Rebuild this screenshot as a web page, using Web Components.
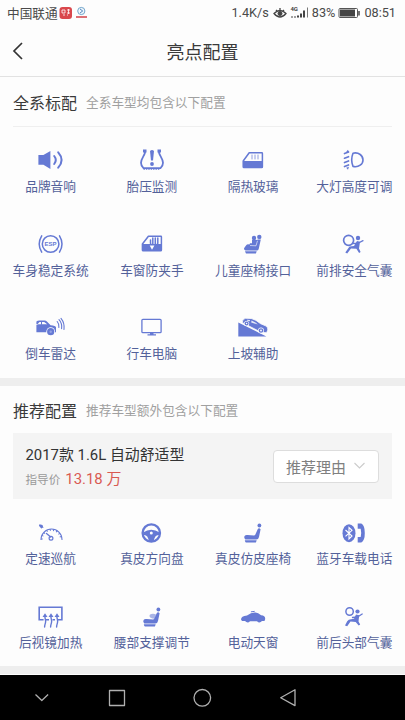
<!DOCTYPE html>
<html lang="zh-CN"><head><meta charset="utf-8"><title>亮点配置</title>
<style>
html,body{margin:0;height:720px;overflow:hidden;background:#fdfdfd}
body{font-family:Roboto,"Noto Sans CJK SC",sans-serif;color:#333}
</style></head><body>
<highlights-page></highlights-page>
<script>
const def=(name,html,setup)=>customElements.define(name,class extends HTMLElement{
  constructor(){super();const t=document.createElement('template');t.innerHTML=html;
    this.attachShadow({mode:'open'}).append(t.content.cloneNode(true));}
  connectedCallback(){if(setup)setup(this,this.shadowRoot);}
});
const L='fill="none" stroke="currentColor" stroke-linecap="round" stroke-linejoin="round"';
const seat='<path d="M22.700 10.200q1.200-1.700 2.900 0L24 18q-.6 2.500-2.700 2.500H10.300q-1.700-1.800-.7-3.500 1-1.400 3-1l6.300.4q1.400.1 1.700-1.300z"/><path d="M9.800 21.300h11.900l-.8 2.200H11q-.8 0-1.200-2.200z"/>';
const icons={
speaker:`<path d="M5.400 9h5l7-4v18l-7-4.200h-5z"/><path ${L} stroke-width="2" d="M21.200 10q3.200 4 0 8M25.200 6.300q6.800 7.700 0 15.400"/>`,
tire:`<path ${L} stroke-width="1.800" d="M11 5.200c.8 3-4 7-4 11.500q0 3.200 2.500 5.400h17q2.500-2.200 2.500-5.400c0-4.500-4.800-8.500-4-11.500"/><path d="M9 3.500h3.500v3H9zM23.500 3.500H27v3h-3.500z"/><path ${L} stroke-width="1.200" stroke-dasharray=".4 2" d="M10 23.200h16"/><path d="M16 5q2-2 4 0l-1 9.500h-2z"/><circle cx="18" cy="18" r="1.900"/>`,
glass:`<path ${L} stroke-width="1.500" d="M8.200 15l6-8.200h12.600q.6 0 .6.600v13.400q0 .8-.8.800H9q-.8 0-.8-.8z"/><path d="M8 15h19.800v6q0 1-1 1H9q-1 0-1-1z"/><path ${L} stroke-width=".9" opacity=".8" d="M17 9v4M20 9v4M23 9v4"/>`,
lamp:`<path ${L} stroke-width="1.600" d="M17 7.200c5.800-1.300 10 2.500 10 6.700s-4.200 7.800-10 6.500q-2.600-6.600 0-13.200z"/><path ${L} stroke-width="1.700" d="M8.500 7.500l4-1.500M8.500 12.200l4-1.500M8.500 16.500l4-1.500M8.500 20.500l4-1.500"/><path d="M10.200 5.700L12 3.800l1 2.700zM10.200 21.700l1.800 2 1-3z"/>`,
esp:`<circle cx="17.600" cy="14" r="8.300" ${L} stroke-width="1.500"/><path ${L} stroke-width="1.500" d="M8.700 5.800q-5 8.200 0 16.400M26.500 5.800q5 8.200 0 16.400"/><text x="17.600" y="16.200" font-family="Liberation Sans,sans-serif" font-size="6" font-weight="700" text-anchor="middle" textLength="12">ESP</text>`,
pinch:`<path ${L} stroke-width="1.500" d="M8.400 14l6-7.800h12.500q.5 0 .5.500V20q0 .8-.8.800H9.200q-.8 0-.8-.8z"/><path d="M8 14h19.700v6q0 1-1 1H9q-1 0-1-1z"/><path ${L} stroke-width="1.500" d="M16.500 10v3q0 2 2 2h3q2.300 0 2.300-2V8M18.800 8v6M21.300 8v6"/><path fill="#fff" d="M15.700 15.500h4.700L18 19.800z"/>`,
child:`<path d="M22.600 9.500h3.200L23.700 19q-.4 1.500-2 1.500H10.500q-2-.8-1.300-2.500l2-2.800q1-1.200 3-.7l5.500.5z"/><path d="M10 21.300h11.700l-.8 2.200H11z"/><circle cx="24.300" cy="6.900" r="2.200"/><circle cx="19" cy="8" r="2.200"/><path d="M17 9.800l5.600.2-.6 5.500h-8l1-2.200h2z"/><path fill="none" stroke="#fff" stroke-width=".6" d="M15 15.500l6 .3 1.500-5"/>`,
airbag:`<circle cx="12.600" cy="10.300" r="5" ${L} stroke-width="1.700"/><circle cx="22" cy="8" r="2.200"/><path d="M21 11l3 .7-1 6.700 1.600 3.500-1.500 1-2.700-4.100-5.400-.3-3.800 5-1.900-1.100 4.200-6 4.500-.5z"/><path ${L} stroke-width="1.300" d="M17.500 13.500l4 0 5.500-2.800"/>`,
radar:`<path fill-rule="evenodd" d="M3.400 8.500q1-1 3-1h5.200q1.400 0 2.300 1l3.700 3.800q5 .3 5.400 2v5h-19.600v-7.500l2.200-.5h8.600L11.200 8.900H6.500l-1.800 2H3.400z"/><circle cx="17.700" cy="18.700" r="4.400" fill="#fff"/><circle cx="17.700" cy="18.700" r="3.600"/><circle cx="17.700" cy="18.700" r="1.200" fill="#93a2e5"/><path d="M8 8.500h1v3.200H8z"/><path ${L} stroke-width="1.100" d="M24.200 8.500q2.200 2.500 1.700 6M26 6.600q3.300 3.600 2.600 9M28 5.300q3.800 4.600 3 11.200"/>`,
monitor:`<rect x="7.900" y="6.300" width="19.200" height="13.400" rx="1" ${L} stroke-width="1.300"/><path d="M16 20h3.500v1.300H22v1.200h-8.500v-1.200H16z"/>`,
hill:`<path d="M3.300 9.500l28 13.900h-28z"/><path stroke="#fdfdfd" stroke-width=".8" d="M7.200 9.500q.2-3.800 3.400-4.200 6-.7 10.400 2.100l4.600 3.300 5.600 2.400q2 1.600 1.600 4l-1.200 2.600-5.300-.3z"/><path fill="#fff" opacity=".85" d="M16.500 7.500l4.300 2.200 2 1.700-6.600-1.900zM12 6.700l3 .4-.2 1.200-3-.8z"/><circle cx="11.600" cy="10.500" r="2.600" fill="#fff"/><circle cx="11.600" cy="10.500" r="2"/><circle cx="11.600" cy="10.500" r=".7" fill="#fff"/><circle cx="26" cy="17.500" r="2.900" fill="#fff"/><circle cx="26" cy="17.500" r="2.300"/><circle cx="26" cy="17.500" r=".9" fill="#fff"/>`,
gauge:`<path ${L} stroke-width="1.100" d="M8 20.500a10.500 10.500 0 1121 0"/><path fill="none" stroke="currentColor" stroke-width="1.600" stroke-dasharray="1 2.300" d="M8.900 20.500a9.400 9.400 0 0119 0"/><path d="M6.500 5.200l3 .8 1 3-1.500-.3-.5 1-2.600-3z"/><path ${L} stroke-width="1.300" d="M13.500 14.500l4.200 3.500"/><circle cx="18" cy="19.300" r="1.900" ${L} stroke-width="1.200"/>`,
wheel:`<circle cx="17.300" cy="14" r="8.700" ${L} stroke-width="2.300"/><path fill-rule="evenodd" d="M9 13.500q8.300-5.500 16.600 0l-.6 2.500q-4.300-.5-5.200 6h-5q-.9-6.500-5.200-6zM17.300 12.400a1.500 1.500 0 100 3 1.500 1.500 0 000-3z"/>`,
seat:`<circle cx="24.400" cy="6.500" r="1.900"/>${seat}`,
phone:`<ellipse cx="13" cy="14.200" rx="6.500" ry="9"/><path fill="none" stroke="#fff" stroke-width="1.100" d="M9.500 11l6.500 6-3 3V8.500l3 2.800-6.500 6"/><path d="M21.700 4.400h3.600q3.500 1.600 3.500 9.500t-3.500 9.500h-3.600v-5.300h3q1-4.200 0-8.400h-3z"/>`,
mirror:`<path fill="none" stroke="currentColor" stroke-width="1.600" d="M10.600 16.700H6.200V4.300h22.700v12.400h-4.400M13 16.700h3M19.500 16.700h2.500"/><path ${L} stroke-width="1.400" d="M12 12.500c-.5 3 1 4 .6 6.500s-1 3-1 5M18 12.500c-.5 3 1 4 .6 6.500s-1 3-1 5M24 12.500c-.5 3 1 4 .6 6.500s-1 3-1 5"/><path d="M9.500 14l2.500-3.800 2.500 3.800zM15.500 14l2.500-3.800 2.500 3.800zM21.500 14l2.500-3.800 2.500 3.800z"/>`,
lumbar:`<circle cx="24.400" cy="6.500" r="1.900"/>${seat}<path opacity=".55" d="M16 11.500q3-1.700 6 0l-.8 4.200q-3.200 0-5-1.300-1.500-1.400-.2-2.900z"/>`,
sunroof:`<path d="M6 16.500q0-3.300 6-4 4.500-3.300 8.500-2.900 2.600.1 5.600 2.700 4.200.3 4.100 3.700l-.7 1.900h-2.500q-2.400 2.800-5 .3h-7q-2.400 2.500-5-.3H7z"/><path ${L} stroke-width="1" d="M16.300 8.800l3-.4"/>`,
head:`<circle cx="13.600" cy="8.500" r="3.700" ${L} stroke-width="1.500"/><circle cx="21.500" cy="8.500" r="2.100"/><path d="M20 11.500l3.200.7-.7 6.300 1.700 3-1.500 1-3-3.600-5.200-.3-3.300 4.700-2.200-.8 2.200-4.200q1.300-2 3.800-2l3-.6z"/><path ${L} stroke-width="1.300" d="M16.500 14.500l5-.5 4.700-3"/>`
};
def('car-icon',`<style>:host{display:block;width:36px;height:28px;color:#6579d4}svg{display:block;overflow:visible}</style><svg width="36" height="28" viewBox="0 0 36 28" fill="currentColor"></svg>`,(h,r)=>{r.querySelector('svg').innerHTML=icons[h.getAttribute('name')];});
def('feature-item',`<style>:host{display:flex;flex-direction:column;align-items:center;height:83.67px;color:#53619a;font-size:12.7px;line-height:18px;white-space:nowrap}span{margin-top:var(--label-gap,3px)}</style><car-icon></car-icon><span><slot></slot></span>`,(h,r)=>{const i=r.querySelector('car-icon'),n=document.createElement('car-icon');n.setAttribute('name',h.getAttribute('icon'));i.replaceWith(n);});
def('feature-grid',`<style>:host{display:grid;grid-template-columns:repeat(4,1fr);overflow:hidden}</style><slot></slot>`);
def('section-heading',`<style>:host{display:flex;align-items:center;height:47px;box-sizing:border-box;margin:0 13px;font-size:16px;color:#3a3a3a;white-space:nowrap}small{font-size:12.7px;color:#a0a0a0;margin-left:9px}</style><slot></slot><small><slot name="note"></slot></small>`);
def('status-bar',`<style>:host{display:flex;align-items:center;height:26px;padding:0 9px 1px 7px;font-size:12.7px;color:#4a4a4a;white-space:nowrap;box-sizing:border-box}.r{margin-left:auto;display:flex;align-items:center}svg{display:block}.time{letter-spacing:0}</style>
<span>中国联通</span><svg width="30" height="14" viewBox="0 0 30 14"><rect x="1.500" y="1" width="12.500" height="12" rx="3" fill="#d9474c"/><path d="M4 4h3v3H4zM9 4h3M9 7h3M10.500 3v5M5 9h2M9 9h1" fill="none" stroke="#fff" stroke-width=".8"/><circle cx="23.300" cy="5" r="3.600" fill="#eef7fd" stroke="#74a6cc"/><path d="M22 3l2.700 2L22 7" fill="none" stroke="#5687bd"/><path d="M18 11h11" stroke="#dd7176" stroke-width="2"/></svg>
<div class="r"><span>1.4K/s</span><svg width="43" height="18" viewBox="0 0 43 18" fill="none" stroke="#444"><path d="M5 9.500q6-6 12 0-6 7-12 0zM7 6l1 1M11 4v2M15 6l-1 1" stroke-width="1.300"/><circle cx="11" cy="9.500" r="2" fill="#444"/><text x="21.500" y="7" fill="#444" stroke="none" font-size="6" font-weight="700" letter-spacing="-.3">4G</text><path d="M22 13h2M25 13h2" stroke-width="1"/><path d="M29 13.500v-2M32 13.500v-4M35 13.500v-7" stroke-width="2"/><path d="M38.500 13.500v-10" stroke-width="1" stroke="#777"/></svg><span>83%</span><svg width="29" height="14" viewBox="0 0 29 14"><rect x="4" y="2.500" width="18.500" height="9" rx="1" fill="#fff" stroke="#555"/><path d="M5 3.500h15v7H5z" fill="#444"/><path d="M24 5v4.500" stroke="#444" stroke-width="1.500"/></svg><span class="time">08:51</span></div>`);
def('title-bar',`<style>:host{display:grid;grid-template-columns:50px 1fr 50px;align-items:center;height:51px;box-sizing:border-box;border-bottom:1.5px solid #e2e2e2;font-size:18px;text-align:center;color:#3a3a3a}svg{display:block}</style><svg width="36" height="30" viewBox="0 0 36 30" fill="none" stroke="#333" stroke-width="1.700"><path d="M22 7l-8 8 8 8"/></svg><span><slot></slot></span>`);
def('trim-card',`<style>:host{display:flex;align-items:center;justify-content:space-between;margin:0 13px;height:66px;padding:0 13px;box-sizing:border-box;background:#f4f4f4;white-space:nowrap}.t{padding-top:3px}.n{font-size:14.900px;line-height:22px;color:#333;margin-left:-.5px}.p{font-size:11.600px;line-height:22px;color:#999;margin-top:2px;margin-left:-.5px}.p b{font-weight:400;font-size:14.900px;color:#d95a52;margin-left:5px}button{all:unset;display:flex;align-items:center;width:106px;height:33px;box-sizing:border-box;padding:0 12px 0 12px;border:1px solid #ddd;border-radius:4px;background:#fff;color:#808080;font-size:15px;justify-content:space-between}svg{display:block}</style><div class="t"><div class="n"><slot name="name"></slot></div><div class="p">指导价<b><slot name="price"></slot></b></div></div><button>推荐理由<svg width="13" height="10" viewBox="0 0 13 10"><path d="M1.500 2l5 5 5-5" fill="none" stroke="#ccc" stroke-width="1.100"/></svg></button>`);
def('nav-bar',`<style>:host{display:block;height:45px;background:#000}svg{display:block}</style><svg width="405" height="45" viewBox="0 0 405 45" fill="none" stroke="#b0b0b0" stroke-width="1.300" stroke-linejoin="round"><path d="M35.500 19.500l6.300 6 6.300-6"/><rect x="109.500" y="15.500" width="15" height="15"/><circle cx="202.300" cy="22.800" r="8.300"/><path d="M295 14.800v15.800l-14.300-7.900z"/></svg>`);
def('highlights-page',`<style>:host{display:flex;flex-direction:column;width:405px;height:720px;overflow:hidden;background:#fdfdfd}
.rule{height:1px;margin:0 13px;background:#efefef}.gap{height:8px;background:#eee}.one{height:232px;margin-top:19px;--label-gap:4px}.two{height:147px;margin-top:20px}.h1{margin-top:2px;padding-bottom:2px}nav-bar{margin-top:auto}</style>
<status-bar></status-bar><title-bar>亮点配置</title-bar>
<section-heading class="h1">全系标配<span slot="note">全系车型均包含以下配置</span></section-heading><div class="rule"></div>
<feature-grid class="one"><feature-item icon="speaker">品牌音响</feature-item><feature-item icon="tire">胎压监测</feature-item><feature-item icon="glass">隔热玻璃</feature-item><feature-item icon="lamp">大灯高度可调</feature-item><feature-item icon="esp">车身稳定系统</feature-item><feature-item icon="pinch">车窗防夹手</feature-item><feature-item icon="child">儿童座椅接口</feature-item><feature-item icon="airbag">前排安全气囊</feature-item><feature-item icon="radar">倒车雷达</feature-item><feature-item icon="monitor">行车电脑</feature-item><feature-item icon="hill">上坡辅助</feature-item></feature-grid>
<div class="gap"></div><section-heading class="h2">推荐配置<span slot="note">推荐车型额外包含以下配置</span></section-heading>
<trim-card><span slot="name">2017款 1.6L 自动舒适型</span><span slot="price">13.18 万</span></trim-card>
<feature-grid class="two"><feature-item icon="gauge">定速巡航</feature-item><feature-item icon="wheel">真皮方向盘</feature-item><feature-item icon="seat">真皮仿皮座椅</feature-item><feature-item icon="phone">蓝牙车载电话</feature-item><feature-item icon="mirror">后视镜加热</feature-item><feature-item icon="lumbar">腰部支撑调节</feature-item><feature-item icon="sunroof">电动天窗</feature-item><feature-item icon="head">前后头部气囊</feature-item></feature-grid><div class="gap"></div><nav-bar></nav-bar>`);
</script></body></html>
